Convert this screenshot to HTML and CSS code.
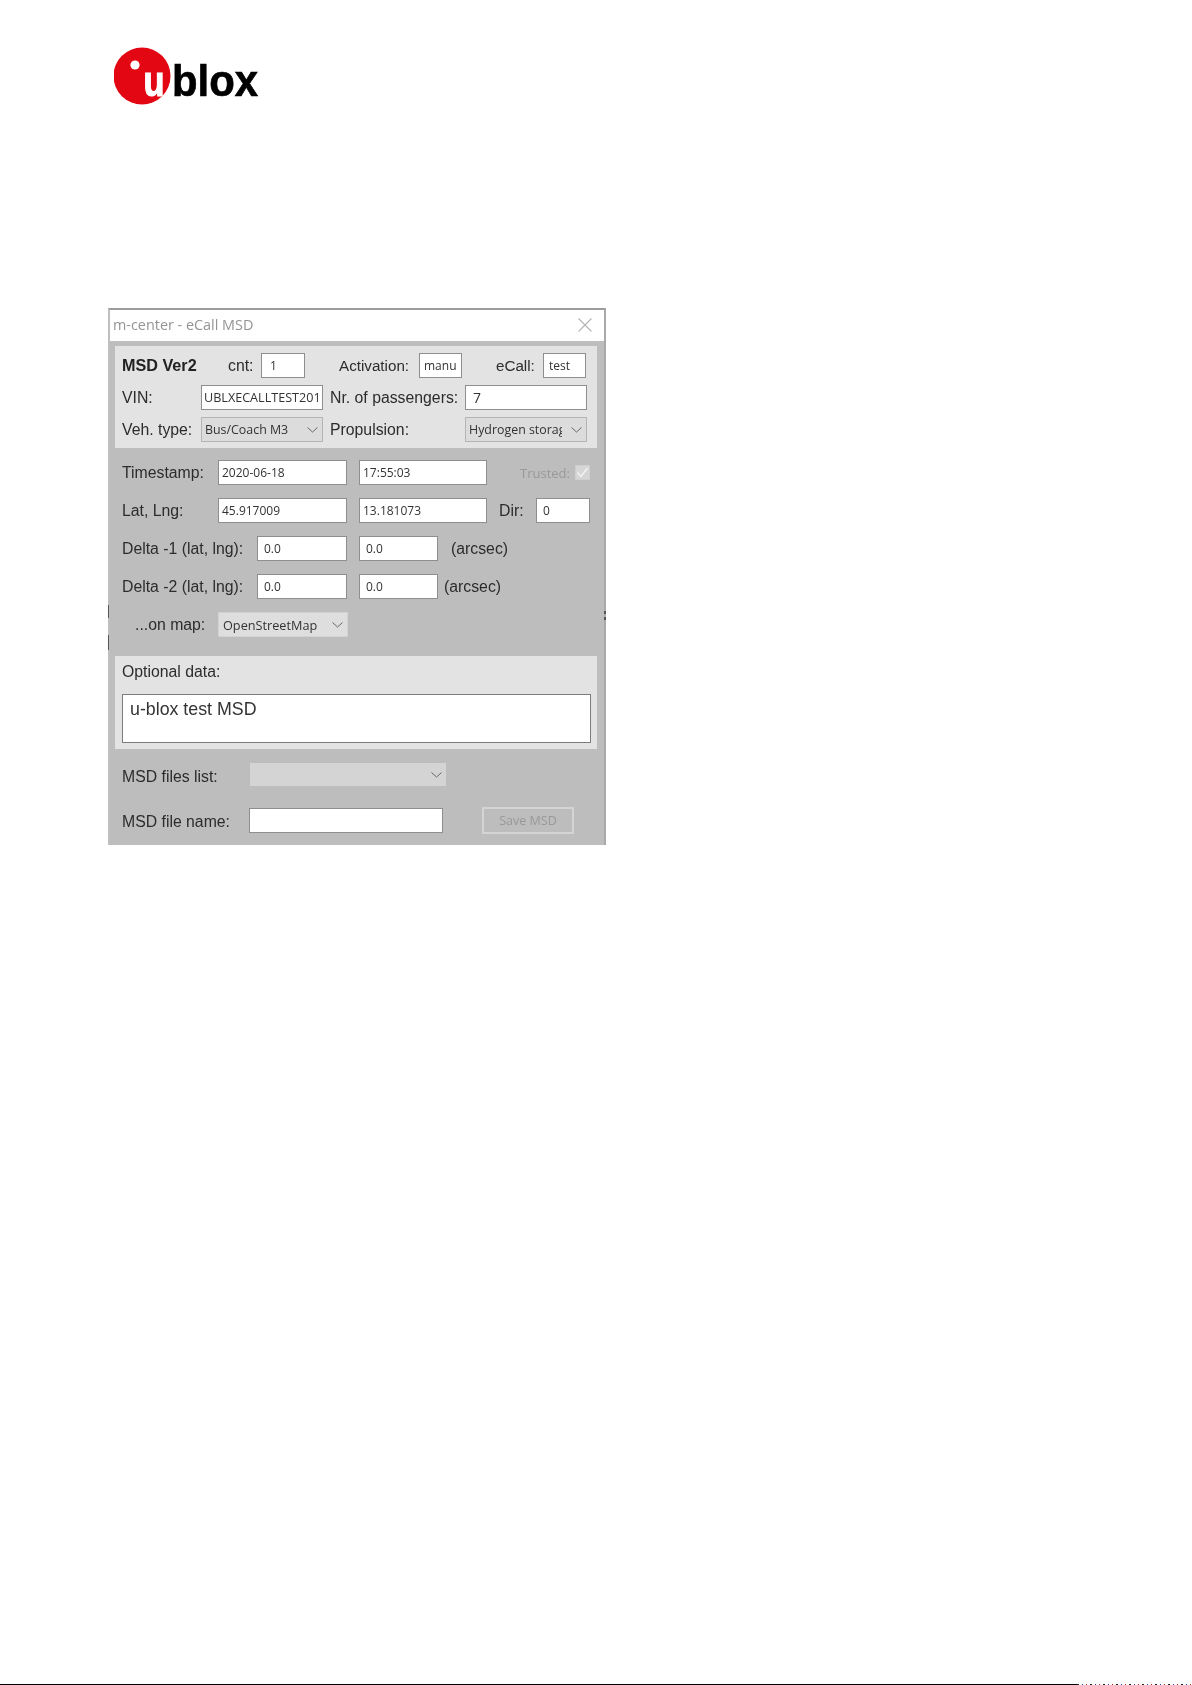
FILE: index.html
```html
<!DOCTYPE html>
<html lang="en">
<head>
<meta charset="utf-8">
<title>m-center - eCall MSD</title>
<link rel="stylesheet" href="styles.css">
</head>
<body>
<header class="page-head">
  <svg class="logo" width="150" height="60" viewBox="0 0 150 60" aria-label="u-blox">
    <circle cx="28" cy="29" r="28.5" fill="#e30613"/>
    <circle cx="21" cy="18" r="4.6" fill="#fff"/>
    <text class="logo-u" x="29.5" y="49" font-size="42" textLength="21" lengthAdjust="spacingAndGlyphs">u</text>
    <text class="logo-text" x="58" y="49" font-size="45" textLength="86" lengthAdjust="spacingAndGlyphs">blox</text>
  </svg>
</header>

<main class="window">
  <i class="tick tick-a"></i>
  <i class="tick tick-b"></i>
  <i class="tick tick-c"></i>
  <i class="tick tick-d"></i>
  <div class="titlebar">
    <span class="title">m-center - eCall MSD</span>
    <svg class="close" width="14" height="14" viewBox="0 0 14 14"><path d="M0.5 0.5L13.5 13.5M13.5 0.5L0.5 13.5" stroke="#b4b4b4" stroke-width="1.1" fill="none"/></svg>
  </div>

  <section class="panel panel-top">
    <div class="row">
      <span class="lab l-msd">MSD Ver2</span>
      <span class="lab l-cnt">cnt:</span>
      <input class="field w44" value="1">
      <span class="lab l-act">Activation:</span>
      <input class="field w43 clip4" value="manual">
      <span class="lab l-ecall">eCall:</span>
      <input class="field w43 clip5" value="test">
    </div>
    <div class="row">
      <span class="lab l-vin">VIN:</span>
      <input class="field w122 vin" value="UBLXECALLTEST2019">
      <span class="lab l-nr">Nr. of passengers:</span>
      <input class="field w122 big" value="7">
    </div>
    <div class="row">
      <span class="lab l-vin">Veh. type:</span>
      <div class="select w122"><span class="select-text">Bus/Coach M3</span><svg class="chev" width="11" height="6" viewBox="0 0 11 6"><path d="M0.5 0.5L5.5 5L10.5 0.5" stroke="#666" fill="none"/></svg></div>
      <span class="lab l-nr">Propulsion:</span>
      <div class="select w122"><span class="select-text">Hydrogen storage</span><svg class="chev" width="11" height="6" viewBox="0 0 11 6"><path d="M0.5 0.5L5.5 5L10.5 0.5" stroke="#666" fill="none"/></svg></div>
    </div>
  </section>

  <section class="middle">
    <div class="row">
      <span class="lab l-short">Timestamp:</span>
      <input class="field w129" value="2020-06-18">
      <input class="field w128 ml12" value="17:55:03">
      <span class="lab l-trusted">Trusted:</span>
      <svg class="check" width="15" height="15" viewBox="0 0 15 15"><rect x="0.5" y="0.5" width="14" height="14" fill="#d6d6d6" stroke="#cfcfcf"/><path d="M2.5 7.5L6 11.5L12.5 3" stroke="#f4f4f4" stroke-width="1.4" fill="none"/></svg>
    </div>
    <div class="row">
      <span class="lab l-short">Lat, Lng:</span>
      <input class="field w129" value="45.917009">
      <input class="field w128 ml12" value="13.181073">
      <span class="lab l-dir">Dir:</span>
      <input class="field w54" value="0">
    </div>
    <div class="row">
      <span class="lab l-delta">Delta -1 (lat, lng):</span>
      <input class="field w90 pad-wide" value="0.0">
      <input class="field w79 ml12 pad-wide" value="0.0">
      <span class="lab l-arc1">(arcsec)</span>
    </div>
    <div class="row">
      <span class="lab l-delta">Delta -2 (lat, lng):</span>
      <input class="field w90 pad-wide" value="0.0">
      <input class="field w79 ml12 pad-wide" value="0.0">
      <span class="lab l-arc2">(arcsec)</span>
    </div>
    <div class="row">
      <span class="lab l-short l-map">...on map:</span>
      <div class="select w130 select-light"><span class="select-text">OpenStreetMap</span><svg class="chev" width="11" height="6" viewBox="0 0 11 6"><path d="M0.5 0.5L5.5 5L10.5 0.5" stroke="#666" fill="none"/></svg></div>
    </div>
  </section>

  <section class="panel panel-opt">
    <div class="opt-label">Optional data:</div>
    <textarea class="opt-text" rows="2">u-blox test MSD</textarea>
  </section>

  <section class="files">
    <div class="row row-list">
      <span class="lab l-file l-list">MSD files list:</span>
      <div class="select w196 select-off"><svg class="chev" width="11" height="6" viewBox="0 0 11 6"><path d="M0.5 0.5L5.5 5L10.5 0.5" stroke="#666" fill="none"/></svg></div>
    </div>
    <div class="row row-name">
      <span class="lab l-file l-name">MSD file name:</span>
      <input class="field w194" value="">
      <button class="save" type="button" disabled>Save MSD</button>
    </div>
  </section>
</main>

<footer class="page-foot">
  <div class="rule"></div>
  <div class="specks"></div>
</footer>
</body>
</html>
```
FILE: styles.css
```css
* { box-sizing: border-box; }
html, body { margin: 0; padding: 0; }
body {
  height: 1685px;
  width: 1192px;
  display: flex;
  flex-direction: column;
  background: #fff;
  overflow: hidden;
  font-family: "Liberation Sans", Arial, sans-serif;
}

/* Logo */
.page-head { height: 308px; padding: 47px 0 0 114px; }
.logo { display: block; filter: blur(0.35px); }
.logo-text, .logo-u { font-family: "Liberation Sans", Arial, sans-serif; font-weight: 700; }
.logo-text { fill: #000; stroke: #000; stroke-width: 0.7px; }
.logo-u { fill: #fff; stroke: #fff; stroke-width: 1.2px; }

/* Window */
.window {
  position: relative;
  width: 498px;
  height: 537px;
  margin-left: 108px;
  background: #bdbdbd;
  border-style: solid;
  border-width: 2px 2px 0 2px;
  border-color: #9c9c9c #a9a9a9 #bdbdbd #bfbfbf;
  filter: blur(0.35px);
  color: #2c2c2c;
}
.tick { position: absolute; display: block; background: #555; width: 1px; }
.tick-a { left: -2px; top: 295px; height: 13px; }
.tick-b { left: -2px; top: 325px; height: 15px; }
.tick-c { right: -2px; top: 301px; height: 3px; width: 2px; }
.tick-d { right: -2px; top: 307px; height: 3px; width: 2px; }
.titlebar {
  height: 31px;
  background: #fff;
  display: flex;
  align-items: center;
  justify-content: space-between;
  padding: 0 12px 2px 3px;
}
.title {
  font-family: "Open Sans", sans-serif;
  font-size: 14.4px;
  color: #949494;
}
.panel { background: #e3e3e3; margin-left: 5px; margin-right: 7px; }
.panel-top { margin-top: 5px; height: 102px; padding: 7px 10px 6px 7px; display: flex; flex-direction: column; gap: 7px; }
.middle { margin: 12px 0 0 12px; display: flex; flex-direction: column; gap: 13px; }
.row { display: flex; align-items: center; height: 25px; }

/* Labels */
.lab { font-size: 15.8px; white-space: nowrap; flex: none; display: block; }
.l-msd { width: 106px; font-weight: 700; font-size: 16.2px; color: #222; }
.l-cnt { width: 33px; }
.l-act { width: 114px; padding-left: 34px; font-size: 15.2px; }
.l-ecall { width: 81px; padding-left: 34px; font-size: 15.2px; }
.l-vin { width: 79px; }
.l-nr { width: 142px; padding-left: 7px; }
.l-short { width: 96px; }
.l-map { padding-left: 13px; }
.l-trusted { margin-left: 33px; width: 55px; font-size: 13px; font-family: "Open Sans", sans-serif; color: #999; }
.l-dir { margin-left: 12px; width: 37px; }
.l-delta { width: 135px; }
.l-arc1 { margin-left: 13px; }
.l-arc2 { margin-left: 6px; }
.l-file { width: 128px; }
.l-list { padding-top: 5px; }
.l-name { padding-top: 2px; }

/* Controls */
.field {
  height: 25px;
  flex: none;
  background: #fff;
  border: 1px solid #8e8e8e;
  border-radius: 0;
  padding: 0 3px;
  margin: 0;
  font-family: "Open Sans", sans-serif;
  font-size: 12px;
  color: #333;
  outline: none;
}
.clip4 { padding: 0 4px; }
.clip5 { padding: 0 5px; }
.vin { padding: 0 2px; font-size: 12.6px; }
.big { font-size: 14px; padding: 0 7px; }
.pad-wide { padding: 0 6px; }
.ml12 { margin-left: 12px; }
.w43 { width: 43px; }
.w44 { width: 44px; padding-left: 8px; }
.w54 { width: 54px; padding-left: 6px; }
.w79 { width: 79px; }
.w90 { width: 90px; }
.w122 { width: 122px; }
.w128 { width: 128px; }
.w129 { width: 129px; }
.w130 { width: 130px; }
.w194 { width: 194px; margin-left: -1px; }
.w196 { width: 196px; }

.select {
  height: 25px;
  flex: none;
  display: flex;
  align-items: center;
  justify-content: space-between;
  background: #dcdcdc;
  border: 1px solid #b4b4b4;
  padding: 0 4px 0 3px;
  font-family: "Open Sans", sans-serif;
  font-size: 12.4px;
  color: #333;
  overflow: hidden;
}
.select-text { flex: 1; overflow: hidden; white-space: nowrap; }
.chev { flex: none; margin-left: 9px; }
.select-light { background: #dedede; border-color: #d2d2d2; padding-left: 4px; font-size: 12.7px; }
.select-off { background: #d4d4d4; border-color: #d4d4d4; height: 23px; justify-content: flex-end; padding-right: 3px; }
.check { flex: none; }

/* Optional data */
.panel-opt { margin-top: 19px; height: 93px; padding: 0 6px 6px 7px; }
.opt-label { height: 38px; padding-top: 7px; font-size: 15.8px; }
.opt-text {
  display: block;
  width: 469px;
  height: 49px;
  resize: none;
  overflow: hidden;
  background: #fff;
  border: 1px solid #7c7c7c;
  border-radius: 0;
  padding: 4px 7px;
  margin: 0;
  font-family: "Liberation Sans", Arial, sans-serif;
  font-size: 17.8px;
  color: #333;
  outline: none;
}

/* Files */
.files { margin-left: 12px; }
.row-list { margin-top: 14px; height: 23px; }
.row-name { margin-top: 21px; height: 27px; }
.save {
  margin-left: 39px;
  width: 92px;
  height: 27px;
  background: #bdbdbd;
  border: 2px solid #d4d4d4;
  border-radius: 0;
  font-family: "Open Sans", sans-serif;
  font-size: 12.5px;
  color: #999;
  padding: 0;
}

/* Page foot */
.page-foot { margin-top: auto; height: 1px; display: flex; }
.rule { width: 1077px; background: #000; }
.specks {
  flex: 1;
  background: repeating-linear-gradient(90deg, #222 0 2px, #fff 2px 5px, #2a3fc0 5px 6px, #fff 6px 9px, #d02020 9px 10px, #fff 10px 13px);
}
```
